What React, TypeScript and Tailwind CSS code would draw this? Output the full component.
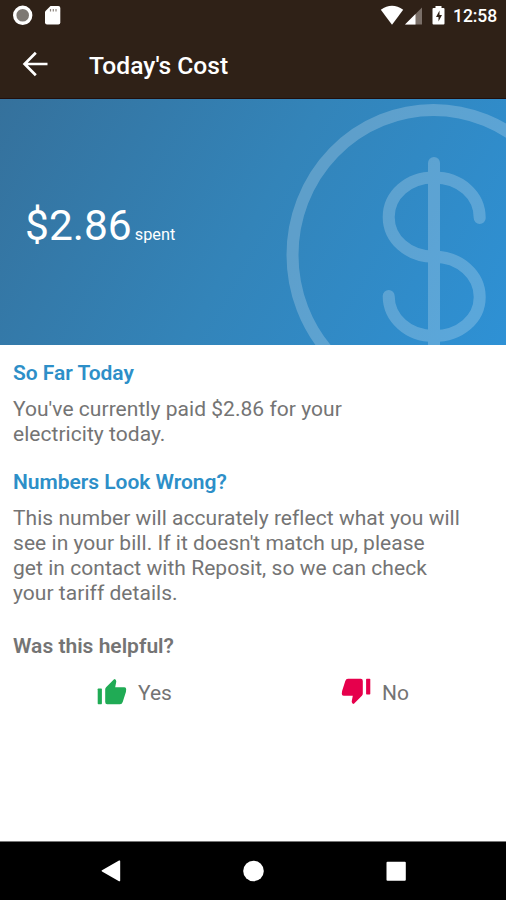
import type { ReactNode } from 'react';

const StatusBar = () => (
  <div className="flex h-8 items-center justify-between pl-3 pr-[9px] text-white">
    <svg className="h-8 w-[60px]" viewBox="12 0 60 32">
      <circle cx="22.7" cy="15.3" r="8" fill="#7d7873" stroke="white" strokeWidth="3.4" />
      <path d="M50.5 6h7.8a2 2 0 0 1 2 2v14.5a2 2 0 0 1-2 2H47a2 2 0 0 1-2-2V11.5z" fill="white" />
      <path d="M50.5 9v2.5M53.3 9v2.5M56 9v2.5" stroke="#8b837c" strokeWidth="1.2" />
    </svg>
    <div className="flex items-center">
      <svg className="h-8 w-[73px]" viewBox="380 0 73 32">
        <path d="M380.8 9.8Q392 1.8 403.2 9.8L392 24.8z" fill="white" />
        <path d="M422 7.5V24.5H405z" fill="#7a6f68" />
        <path d="M415.5 14V24.5H405z" fill="white" />
        <path d="M435.5 6h6v2h2a1 1 0 0 1 1 1v14.5a1 1 0 0 1-1 1h-10a1 1 0 0 1-1-1V9a1 1 0 0 1 1-1h2z" fill="white" />
        <path d="M439.5 10.5l-3.5 6.5h2.5v4.5l3.5-6.5h-2.5z" fill="#2f2117" />
      </svg>
      <span className="text-[17.5px] font-medium leading-8 tracking-[-0.1px]">12:58</span>
    </div>
  </div>
);

const DollarArt = () => (
  <svg className="absolute right-0 top-0 h-[246px] w-[230px]" viewBox="276 99 230 246" fill="none">
    <g stroke="white" strokeWidth="12" strokeLinecap="round" opacity="0.21">
      <ellipse cx="433.5" cy="255" rx="141" ry="145" />
      <path d="M434 163V360" />
      <path d="M479.7 218C479.7 195 460 177.5 434 177.5S388.7 195 388.7 217 408 256.7 434 256.7 479.7 275 479.7 297 460 336 434 336 388.7 318 388.7 296" />
    </g>
  </svg>
);

const Thumb = ({ className }: { className: string }) => (
  <svg className={`h-[27px] w-[30px] ${className}`} viewBox="0 0 30 27" fill="currentColor">
    <rect x="0.7" y="10.5" width="4.2" height="15.7" rx="0.7" />
    <path d="M8.2 11.5Q8.2 10.3 9.1 9.3L17.3 1Q19.3 1.2 19.3 3.5L18.2 9.3H27.3Q29.3 9.3 29.2 11.3L28.9 14L25.7 24Q25 26.2 23 26.2H10.2Q8.2 26.2 8.2 24z" />
  </svg>
);

const Section = ({ title, children }: { title: string; children: ReactNode }) => (
  <section className="mb-[23px]">
    <h2 className="mb-[11px] text-[21px] font-semibold leading-[25px] tracking-[-0.03px] text-[#2d8fc8]">{title}</h2>
    <p className="whitespace-nowrap text-[21px] leading-[25px] tracking-[0.04px]">{children}</p>
  </section>
);

const NavBar = () => (
  <nav className="h-[59px] border-t border-[#777] bg-black">
    <svg className="h-[58px] w-full" viewBox="0 842 506 58" fill="white">
      <path d="M102 870.3L119 860.5a.8.8 0 0 1 1.2.7V880.5a.8.8 0 0 1-1.2.7L102 871.5a.7.7 0 0 1 0-1.2z" />
      <circle cx="253.5" cy="871" r="10.3" />
      <rect x="386.5" y="861.7" width="19.3" height="19" rx="1" />
    </svg>
  </nav>
);

const App = () => (
  <div className="flex h-[900px] w-[506px] flex-col overflow-hidden bg-white font-['Roboto',sans-serif]">
    <header className="h-[99px] border-b border-[#210f0d] bg-[#2f2117]">
      <StatusBar />
      <div className="flex h-[66px] items-center text-white">
        <svg className="ml-[19px] size-8" viewBox="0 0 32 32" fill="none" stroke="white" strokeWidth="2.7">
          <path d="M28.5 15H6M16.8 3.8L5.6 15l11.2 11.2" />
        </svg>
        <h1 className="ml-[38px] mt-px text-[24.6px] font-medium leading-8">Today's Cost</h1>
      </div>
    </header>

    <div className="relative h-[246px] overflow-hidden bg-linear-[120deg] from-[#35719c] via-[#3384b9] to-[#2e91d5]">
      <DollarArt />
      <div className="flex items-baseline pl-[25px] pt-[100px] text-white">
        <span className="text-[42.5px] leading-[54px]">$2.86</span>
        <span className="ml-[3px] text-[16.3px]">spent</span>
      </div>
    </div>

    <main className="flex-1 px-[13px] pt-4 text-[#747474]">
      <Section title="So Far Today">
        You've currently paid $2.86 for your
        <br />
        electricity today.
      </Section>
      <Section title="Numbers Look Wrong?">
        This number will accurately reflect what you will
        <br />
        see in your bill. If it doesn't match up, please
        <br />
        get in contact with Reposit, so we can check
        <br />
        your tariff details.
      </Section>

      <h3 className="mt-[28px] text-[21px] font-semibold leading-[25px]">Was this helpful?</h3>
      <div className="mt-[18px] flex text-[21px] leading-8">
        <div className="ml-[84px] flex w-[244px] items-center">
          <Thumb className="mb-[3px] text-[#20ab55]" />
          <span className="ml-[11px]">Yes</span>
        </div>
        <div className="flex items-center">
          <Thumb className="mb-[3px] rotate-180 text-[#e6004c]" />
          <span className="ml-[11px]">No</span>
        </div>
      </div>
    </main>

    <NavBar />
  </div>
);

export default App;
